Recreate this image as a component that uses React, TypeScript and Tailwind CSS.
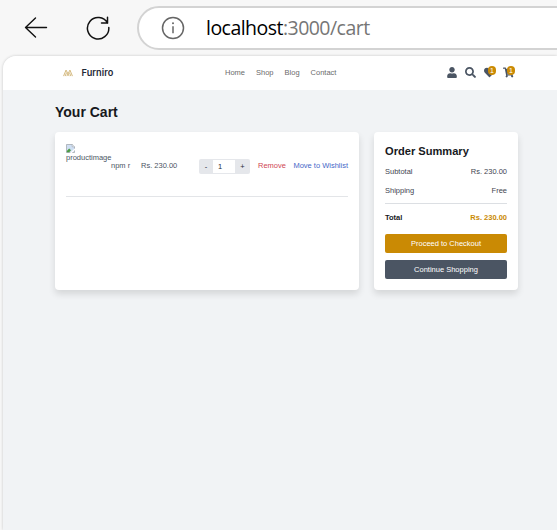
import React from "react";
import { FaUser, FaSearch, FaHeart, FaShoppingCart } from "react-icons/fa";

function BrowserBar() {
  return (
    <div className="flex h-[56px] items-start bg-[#f7f7f7]">
      <svg className="ml-[24px] mt-[16px] h-6 w-6 shrink-0" viewBox="0 0 24 24" fill="none" stroke="#111" strokeWidth="1.4" strokeLinecap="round" strokeLinejoin="round">
        <path d="M22.5 11.5H1.5M11.5 2L1.5 11.5l10 9.5" />
      </svg>
      <svg className="ml-[38px] mt-[16px] h-6 w-6 shrink-0" viewBox="0 0 24 24" fill="none" stroke="#111" strokeWidth="1.5" strokeLinecap="round" strokeLinejoin="round">
        <path d="M22.8 11.5A10.7 10.7 0 1 1 21.5 7.1M21.5 1.3v5.8h-6" />
      </svg>
      <div className="-mr-10 ml-[27px] mt-[6px] flex h-[44px] flex-1 items-center rounded-full border-2 border-[#d3d3d3] bg-white pl-[22px]">
        <svg className="h-6 w-6 shrink-0" viewBox="0 0 24 24" fill="none" stroke="#666" strokeWidth="1.5">
          <circle cx="12" cy="12" r="10.5" />
          <path d="M12 10.3v7" />
          <circle cx="12" cy="7.2" r="1" fill="#666" stroke="none" />
        </svg>
        <span className="ml-[21px] whitespace-nowrap font-['Open_Sans',sans-serif] text-[19.5px] leading-none tracking-[-0.53px] text-black">
          localhost<span className="text-[#767676]">:3000/cart</span>
        </span>
      </div>
    </div>
  );
}

function Badge() {
  return (
    <span className="absolute -top-[1px] left-[4px] flex h-[9px] w-[8px] items-center justify-center rounded-full bg-[#ca8a04] text-[7px] leading-none text-white">
      1
    </span>
  );
}

function Header() {
  return (
    <header className="flex h-[34px] shrink-0 items-center bg-white pb-[1px]">
      <svg className="ml-[59px] mt-[1px] h-[8px] w-[12px] shrink-0" viewBox="0 0 12 9" fill="none" stroke="#d3b77c" strokeWidth="1.1">
        <path d="M1 8L3.8 1.2 7.3 8M4.7 8L8.2 1.2 11 8M2.8 8l1.6-4M9.2 8L7.6 4" />
      </svg>
      <span className="ml-[7.5px] w-[143.5px] font-['Inter',sans-serif] text-[9.2px] font-semibold leading-none tracking-[0.05px] text-[#1f2937]">Furniro</span>
      <nav className="flex gap-[11px] text-[7.5px] leading-none text-[#6b6b6b]">
        <span>Home</span>
        <span>Shop</span>
        <span>Blog</span>
        <span>Contact</span>
      </nav>
      <div className="ml-auto mr-[43px] flex gap-[8px] text-[11px] text-[#4b5563]">
        <FaUser className="w-[10px]" />
        <FaSearch />
        <div className="relative"><FaHeart /><Badge /></div>
        <div className="relative"><FaShoppingCart /><Badge /></div>
      </div>
    </header>
  );
}

function BrokenImage() {
  return (
    <div className="w-[45px] shrink-0 text-[#4b5563]">
      <svg className="h-[9px] w-[9px]" viewBox="0 0 9 9">
        <path d="M.5.5h5.8L8.5 2.7v5.8h-8z" fill="#cfdff3" stroke="#9ba1a8" strokeWidth=".7" />
        <path d="M.8 8.2V7l2.4-2.5L5 6.2 3.2 8.2z" fill="#4c9b43" />
        <path d="M6.2.5v2.3h2.3" fill="#fff" stroke="#9ba1a8" strokeWidth=".6" />
        <path d="M3.8 9L9 4.3V6L5.8 9z" fill="#fff" />
      </svg>
      <div className="mt-[1px] whitespace-nowrap leading-[8px]">productimage</div>
    </div>
  );
}

function CartItems() {
  return (
    <section className="h-[158px] w-[304px] rounded-[4px] bg-white px-[11px] pt-[12px] shadow-[0_4px_7px_rgba(0,0,0,0.12)]">
      <div className="flex h-[53px] border-b border-[#e3e5e8] text-[7.5px] leading-[8px] text-[#4b5563]">
        <BrokenImage />
        <span className="mt-[18px] w-[30px]">npm r</span>
        <span className="mt-[18px] w-[58px]">Rs. 230.00</span>
        <div className="mt-[15px] flex h-[15px] w-[51px] shrink-0 items-center overflow-hidden rounded-[2px] bg-[#e5e7eb] text-[#1f2937]">
          <span className="w-[14px] text-center">-</span>
          <span className="flex h-[15px] w-[22px] items-center border-y border-[#e5e7eb] bg-white pl-[5px]">1</span>
          <span className="w-[15px] text-center">+</span>
        </div>
        <span className="ml-[8px] mt-[18px] text-[#cf4552]">Remove</span>
        <span className="ml-auto mt-[18px] whitespace-nowrap text-[#4668c8]">Move to Wishlist</span>
      </div>
    </section>
  );
}

function Summary() {
  return (
    <section className="flex h-[158px] w-[144px] flex-col rounded-[4px] bg-white px-[11px] pt-[12px] text-[7.5px] leading-[8px] text-[#3f4550] shadow-[0_4px_7px_rgba(0,0,0,0.12)]">
      <h2 className="whitespace-nowrap text-[11.1px] font-bold leading-[14px] text-[#17191d]">Order Summary</h2>
      <div className="mt-[10px] flex justify-between"><span>Subtotal</span><span>Rs. 230.00</span></div>
      <div className="mt-[11px] flex justify-between"><span>Shipping</span><span>Free</span></div>
      <div className="mt-[8px] flex justify-between border-t border-[#dcdfe3] pt-[10px] font-bold text-[#17191d]">
        <span>Total</span><span className="text-[#ca8a04]">Rs. 230.00</span>
      </div>
      <button className="mt-[12px] h-[19px] rounded-[2px] bg-[#ca8a04] text-white">Proceed to Checkout</button>
      <button className="mt-[7px] h-[19px] rounded-[2px] bg-[#4b5563] text-white">Continue Shopping</button>
    </section>
  );
}

export default function App() {
  return (
    <div className="flex h-[530px] w-[557px] flex-col overflow-hidden bg-[#f7f7f7] font-['Liberation_Sans',Arial,sans-serif]">
      <BrowserBar />
      <div className="ml-[3px] flex flex-1 flex-col overflow-hidden rounded-tl-[13px] bg-[#f1f3f5] shadow-[0_0_3px_rgba(0,0,0,0.2)]">
        <Header />
        <main className="pl-[52px] pt-[14px]">
          <h1 className="text-[14px] font-bold leading-[16px] text-[#17191d]">Your Cart</h1>
          <div className="mt-[12px] flex gap-[15px]">
            <CartItems />
            <Summary />
          </div>
        </main>
      </div>
    </div>
  );
}
